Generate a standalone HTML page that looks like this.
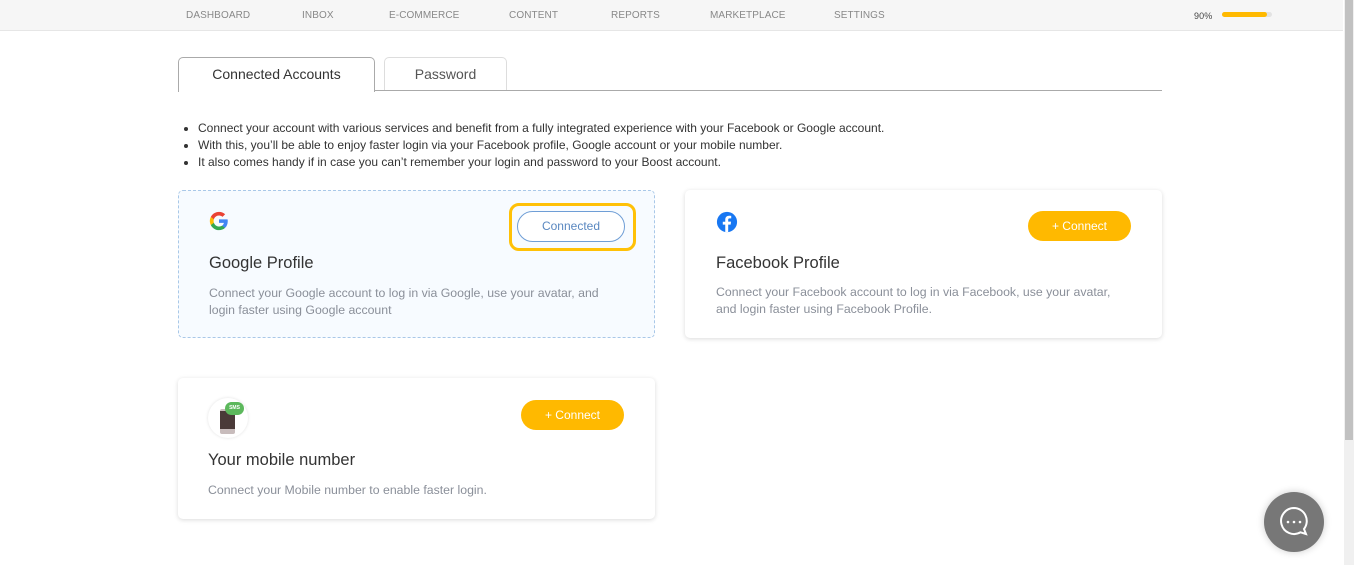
<!DOCTYPE html>
<html><head><style>
*{box-sizing:border-box;margin:0;padding:0}
body{width:1354px;height:565px;overflow:hidden;background:#fff;font-family:"Liberation Sans",sans-serif;position:relative;color:#444}
.nav{position:absolute;left:0;top:0;width:1343px;height:31px;background:#f6f6f6;border-bottom:1px solid #e6e6e6}
.nav span{position:absolute;top:10px;font-size:10px;color:#888;letter-spacing:.1px}
.sb{position:absolute;left:1344px;top:0;width:10px;height:565px;background:#f0f0f0}
.sb div{position:absolute;left:1px;top:0;width:8px;height:440px;background:#c1c1c1}
.tab{position:absolute;top:57px;height:34px;border:1px solid #ddd;border-bottom:none;border-radius:5px 5px 0 0;text-align:center;line-height:33px;font-size:14px;background:#fff}
.line{position:absolute;left:178px;top:90px;width:984px;height:1px;background:#aaa}
ul{position:absolute;left:198px;top:120px;font-size:12px;line-height:17px;color:#333}
.card{position:absolute;border-radius:5px;background:#fff;box-shadow:0 1px 5px rgba(0,0,0,.15)}
.card h3{position:absolute;font-weight:normal;font-size:16.5px;color:#333}
.card p{position:absolute;font-size:12.3px;line-height:17px;color:#8a8f99}
.btn{position:absolute;height:30px;border-radius:15px;background:#ffb900;color:#fff;font-size:12px;text-align:center;line-height:30px}
</style></head><body>
<div class="nav">
<span style="left:186px">DASHBOARD</span><span style="left:302px">INBOX</span><span style="left:389px">E-COMMERCE</span><span style="left:509px">CONTENT</span><span style="left:611px">REPORTS</span><span style="left:710px">MARKETPLACE</span><span style="left:834px">SETTINGS</span>
<span style="left:1194px;color:#444;top:11px;font-size:9px">90%</span>
<div style="position:absolute;left:1222px;top:12px;width:50px;height:5px;border-radius:3px;background:#e3e3e3"><div style="width:45px;height:5px;border-radius:3px;background:#ffb900"></div></div>
</div>
<div class="sb"><div></div></div>
<div class="tab" style="left:178px;width:197px;border-color:#aaa;height:35px;color:#333">Connected Accounts</div>
<div class="tab" style="left:384px;width:123px;color:#555">Password</div>
<div class="line"></div>
<div style="position:absolute;left:179px;top:90px;width:195px;height:2px;background:#fff"></div>
<ul>
<li>Connect your account with various services and benefit from a fully integrated experience with your Facebook or Google account.</li>
<li>With this, you’ll be able to enjoy faster login via your Facebook profile, Google account or your mobile number.</li>
<li>It also comes handy if in case you can’t remember your login and password to your Boost account.</li>
</ul>
<div class="card" style="left:178px;top:190px;width:477px;height:148px;background:#f7fbff;box-shadow:none;border:1px dashed #a9c8e8">
<svg style="position:absolute;left:30px;top:20px" width="20" height="20" viewBox="0 0 48 48"><path fill="#4285F4" d="M45 24.5c0-1.6-.1-3.1-.4-4.5H24v8.5h11.8c-.5 2.7-2 5-4.4 6.6v5.5h7.1C42.6 36.7 45 31.1 45 24.5z"/><path fill="#34A853" d="M24 46c5.9 0 10.9-2 14.5-5.4l-7.1-5.5c-2 1.3-4.5 2.1-7.4 2.1-5.7 0-10.6-3.9-12.3-9.1H4.4v5.7C8 40.9 15.4 46 24 46z"/><path fill="#FBBC05" d="M11.7 28.1c-.4-1.3-.7-2.7-.7-4.1s.3-2.8.7-4.1v-5.7H4.4C2.9 17.2 2 20.5 2 24s.9 6.8 2.4 9.8l7.3-5.7z"/><path fill="#EA4335" d="M24 10.8c3.2 0 6.1 1.1 8.4 3.3l6.3-6.3C34.9 4.2 29.9 2 24 2 15.4 2 8 7.1 4.4 14.2l7.3 5.7c1.7-5.2 6.6-9.1 12.3-9.1z"/></svg>
<div style="position:absolute;left:330px;top:12px;width:127px;height:48px;border:3px solid #ffc107;border-radius:10px"></div>
<div style="position:absolute;left:338px;top:20px;width:108px;height:31px;border:1px solid #6f9ed6;border-radius:16px;background:#fff;color:#5a88c0;font-size:12px;text-align:center;line-height:29px">Connected</div>
<h3 style="left:30px;top:63px">Google Profile</h3>
<p style="left:30px;top:94px">Connect your Google account to log in via Google, use your avatar, and<br>login faster using Google account</p>
</div>
<div class="card" style="left:685px;top:190px;width:477px;height:148px">
<svg style="position:absolute;left:31px;top:21px" width="22" height="22" viewBox="0 0 24 24"><circle cx="12" cy="12" r="11" fill="#1877f2"/><path fill="#fff" d="M13.3 23v-8.2h2.7l.4-3.2h-3.1V9.7c0-.9.3-1.6 1.6-1.6h1.7V5.3c-.3 0-1.3-.1-2.4-.1-2.4 0-4.1 1.5-4.1 4.2v2.3H7.4v3.2h2.7V23z"/></svg>
<div class="btn" style="left:343px;top:21px;width:103px">+ Connect</div>
<h3 style="left:31px;top:64px">Facebook Profile</h3>
<p style="left:31px;top:94px">Connect your Facebook account to log in via Facebook, use your avatar,<br>and login faster using Facebook Profile.</p>
</div>
<div class="card" style="left:178px;top:378px;width:477px;height:141px">
<div style="position:absolute;left:30px;top:20px;width:40px;height:40px;border-radius:50%;background:#fff;box-shadow:0 0 3px rgba(0,0,0,.12)"></div>
<div style="position:absolute;left:42px;top:31px;width:15px;height:25px;border-radius:2px;background:#c8bcbc"></div>
<div style="position:absolute;left:42px;top:33px;width:15px;height:18px;background:#4a3a38"></div>
<div style="position:absolute;left:47px;top:24px;width:19px;height:13px;border-radius:7px;background:#5cb85c;color:#fff;font-size:5px;text-align:center;line-height:13px;font-weight:bold">SMS</div>
<div class="btn" style="left:343px;top:22px;width:103px">+ Connect</div>
<h3 style="left:30px;top:73px">Your mobile number</h3>
<p style="left:30px;top:104px">Connect your Mobile number to enable faster login.</p>
</div>
<div style="position:absolute;left:1264px;top:492px;width:60px;height:60px;border-radius:50%;background:#777;box-shadow:0 0 8px rgba(0,0,0,.2)">
<svg width="60" height="60" viewBox="0 0 60 60"><path d="M30 16a13 13 0 1 0 6.5 24.3L42 42l-2-5A13 13 0 0 0 30 16z" fill="none" stroke="#fff" stroke-width="2"/><circle cx="24" cy="30" r="1.3" fill="#fff"/><circle cx="30" cy="30" r="1.3" fill="#fff"/><circle cx="36" cy="30" r="1.3" fill="#fff"/></svg>
</div>
</body></html>
